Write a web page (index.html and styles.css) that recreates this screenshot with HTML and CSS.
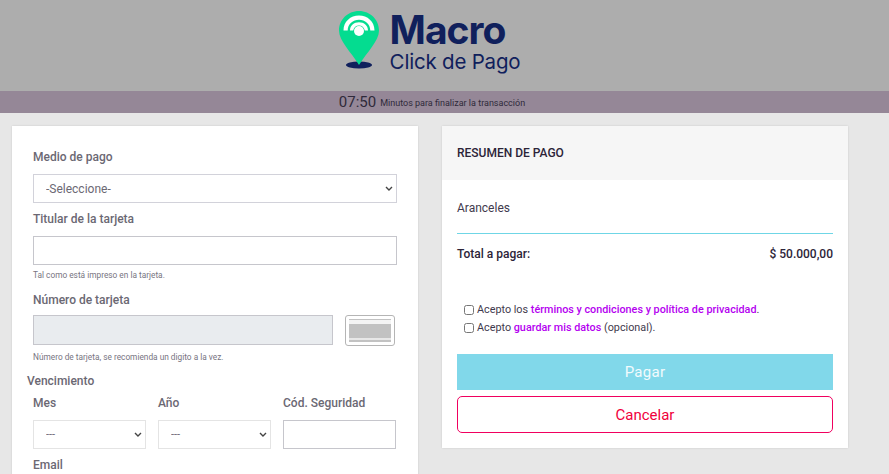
FILE: index.html
```html
<!DOCTYPE html>
<html>
<head>
    <meta charset="UTF-8">
    <title>Macro Click de Pago</title>
    <link rel="stylesheet" href="styles.css">
</head>
<body>
    <div class="header">
        <div class="logo">
            <svg class="logo-pin" width="44" height="60" viewBox="0 0 44 60">
                <ellipse cx="21" cy="55" rx="13" ry="3.5" fill="#10205c"/>
                <path d="M21 1C9.5 1 1 10 1 20.5C1 31 13 42 21 55C29 42 41 31 41 20.5C41 10 32.500 1 21 1Z" fill="#04dc90"/>
                <path d="M5.500 20.500C5.500 11.500 12.500 5.500 21 5.500C29.500 5.500 36.500 11.500 36.500 20.500H32.300C32.300 14 27 9.700 21 9.700C15 9.700 9.700 14 9.700 20.500Z" fill="#fff"/>
                <path d="M12 20.500C12 15.500 16 12.300 21 12.300C26 12.300 30 15.500 30 20.500H26.800C26 17 24 15.500 21 15.500C18 15.500 16 17 15.200 20.500Z" fill="#fff"/>
                <circle cx="21" cy="21" r="5" fill="#fff"/>
            </svg>
            <div class="logo-text">
                <div class="logo-name">Macro</div>
                <div class="logo-sub">Click de Pago</div>
            </div>
        </div>
    </div>
    <div class="timer">
        <span class="timer-time">07:50</span>
        <span class="timer-label">Minutos para finalizar la transacción</span>
    </div>

    <div class="content">
        <!-- datos de la tarjeta -->
        <form class="card form-card">
            <div class="form-group">
                <label>Medio de pago</label>
                <select class="control select-main">
                    <option>-Seleccione-</option>
                </select>
            </div>
            <div class="form-group">
                <label>Titular de la tarjeta</label>
                <input type="text" class="control">
                <small class="hint">Tal como está impreso en la tarjeta.</small>
            </div>
            <div class="form-group card-number">
                <label>Número de tarjeta</label>
                <div class="number-row">
                    <input type="text" class="control number-input" disabled>
                    <div class="card-icon">
                        <div class="card-icon-inner"></div>
                    </div>
                </div>
                <small class="hint">Número de tarjeta, se recomienda un digito a la vez.</small>
            </div>
            <div class="expiry-title">Vencimiento</div>
            <div class="expiry-row">
                <div class="expiry-col">
                    <label>Mes</label>
                    <select class="control select-small">
                        <option>---</option>
                    </select>
                </div>
                <div class="expiry-col">
                    <label>Año</label>
                    <select class="control select-small">
                        <option>---</option>
                    </select>
                </div>
                <div class="expiry-col">
                    <label>Cód. Seguridad</label>
                    <input type="text" class="control">
                </div>
            </div>
            <div class="form-group">
                <label>Email</label>
                <input type="text" class="control">
            </div>
        </form>

        <!-- resumen -->
        <div class="card summary-card">
            <div class="summary-header">RESUMEN DE PAGO</div>
            <div class="summary-body">
                <div class="summary-item">Aranceles</div>
                <div class="summary-total">
                    <span>Total a pagar:</span>
                    <span>$ 50.000,00</span>
                </div>
                <div class="terms">
                    <label class="check-row">
                        <input type="checkbox">
                        <span>Acepto los <a href="#">términos y condiciones y política de privacidad</a>.</span>
                    </label>
                    <label class="check-row">
                        <input type="checkbox">
                        <span>Acepto <a href="#">guardar mis datos</a> (opcional).</span>
                    </label>
                </div>
                <button type="button" class="pay-button">Pagar</button>
                <button type="button" class="cancel-button">Cancelar</button>
            </div>
        </div>
    </div>
</body>
</html>
```

FILE: styles.css
```css
html {
    overflow: hidden;
}
body {
    font-family: Roboto, "Liberation Sans", sans-serif;
    margin: 0;
    background: #e7e7e7;
    color: #212529;
}
.header {
    height: 91px;
    background: #adadad;
    display: flex;
    justify-content: center;
}
.logo {
    display: flex;
    align-items: flex-start;
    margin-left: -31px;
    padding-top: 10px;
}
.logo-pin {
    display: block;
    margin-right: 8px;
}
.logo-name {
    font-family: Inter, sans-serif;
    font-size: 39px;
    font-weight: 700;
    line-height: 40px;
    letter-spacing: -1px;
    color: #10205c;
}
.logo-sub {
    font-family: Inter, sans-serif;
    font-size: 20.5px;
    line-height: 24px;
    color: #10205c;
    letter-spacing: -0.2px;
}
.timer {
    height: 22px;
    background: #958797;
    display: flex;
    align-items: center;
    justify-content: center;
    gap: 4px;
    color: #2f2a3a;
    padding-right: 25px;
}
.timer-time {
    font-size: 15px;
}
.timer-label {
    font-size: 9px;
    margin-top: 2px;
}
.content {
    display: grid;
    grid-template-columns: 406px 406px;
    gap: 24px;
    align-items: start;
    padding: 13px 12px 0;
}
.card {
    background: white;
    box-shadow: 0 0 2px rgba(0,0,0,0.12);
}
.form-card {
    padding: 22px 21px 20px;
}
label {
    display: block;
    font-size: 12px;
    font-weight: 500;
    line-height: 18px;
    color: #6b6873;
}
.form-group {
    margin-bottom: 7px;
}
.form-group > label {
    margin-bottom: 8px;
}
.control {
    display: block;
    width: 100%;
    height: 29px;
    box-sizing: border-box;
    border: 1px solid #c6c6cc;
    border-radius: 0;
    background: white;
    font-family: Roboto, "Liberation Sans", sans-serif;
    font-size: 12px;
    color: #6b6873;
    padding: 0 8px;
    margin: 0;
}
select.control {
    appearance: none;
    background: white url("data:image/svg+xml,%3Csvg xmlns='http://www.w3.org/2000/svg' width='8' height='5'%3E%3Cpath d='M1 1l3 3 3-3' fill='none' stroke='%23444' stroke-width='1.4'/%3E%3C/svg%3E") no-repeat right 3px center;
}
.select-main {
    padding-left: 12px;
    border-color: #d2d2da;
}
.select-small {
    padding-left: 12px;
    border-color: #e4e4e4;
    font-size: 11px;
}
.hint {
    display: block;
    font-size: 8.3px;
    line-height: 12px;
    color: #77747f;
    margin-top: 4px;
}
.card-number {
    margin-top: 10px;
}
.form-group.card-number > label {
    margin-bottom: 6px;
}
.card-number .hint {
    margin-top: 5px;
}
.number-row {
    display: flex;
    align-items: flex-start;
}
.number-input {
    width: 300px;
    height: 30px;
    background: #e9ecef;
}
.card-icon {
    width: 50px;
    height: 31px;
    box-sizing: border-box;
    border: 1px solid #b5b5b5;
    border-radius: 3px;
    margin-left: 12px;
    padding: 3px;
}
.card-icon-inner {
    height: 23px;
    background: linear-gradient(#c2c2c2 0 1px, #f4f4f4 1px 5px, #c2c2c2 5px 19px, #e8e8e8 19px 21px, #c2c2c2 21px);
}
.expiry-title {
    font-size: 12px;
    font-weight: 500;
    line-height: 18px;
    color: #6b6873;
    margin: 9px 0 0 -6px;
}
.expiry-row {
    display: grid;
    grid-template-columns: 113px 113px 113px;
    gap: 12px;
    margin-top: 4px;
    margin-bottom: 7px;
}
.expiry-col label {
    margin-bottom: 8px;
}
.summary-header {
    height: 54px;
    background: #f6f6f6;
    padding-left: 15px;
    display: flex;
    align-items: center;
    font-size: 12px;
    font-weight: 500;
    color: #2c2438;
}
.summary-body {
    padding: 0 15px 15px;
}
.summary-item {
    font-size: 12px;
    line-height: 18px;
    color: #3f3a4d;
    padding: 19px 0 16px;
    border-bottom: 1px solid #6fd6e6;
}
.summary-total {
    display: flex;
    justify-content: space-between;
    font-size: 12px;
    font-weight: 500;
    line-height: 18px;
    color: #2c2438;
    margin-top: 11px;
}
.terms {
    margin-top: 38px;
    padding-left: 7px;
}
.check-row {
    display: flex;
    align-items: center;
    font-weight: 400;
    font-size: 10.8px;
    color: #3f3a4d;
    margin-bottom: 0;
}
.check-row input {
    width: 10px;
    height: 10px;
    margin: 0 3px 0 0;
}
.check-row a {
    color: #b400f0;
    font-weight: 500;
    text-decoration: none;
}
.pay-button {
    display: block;
    width: 100%;
    height: 36px;
    margin-top: 17px;
    border: none;
    background: #81d8ea;
    color: #f2fbfd;
    font-family: Roboto, "Liberation Sans", sans-serif;
    font-size: 15px;
    letter-spacing: 0.3px;
}
.cancel-button {
    display: block;
    width: 100%;
    height: 37px;
    margin-top: 6px;
    box-sizing: border-box;
    border: 1px solid #f0005f;
    border-radius: 5px;
    background: white;
    color: #f0003c;
    font-family: Roboto, "Liberation Sans", sans-serif;
    font-size: 15px;
}
```
